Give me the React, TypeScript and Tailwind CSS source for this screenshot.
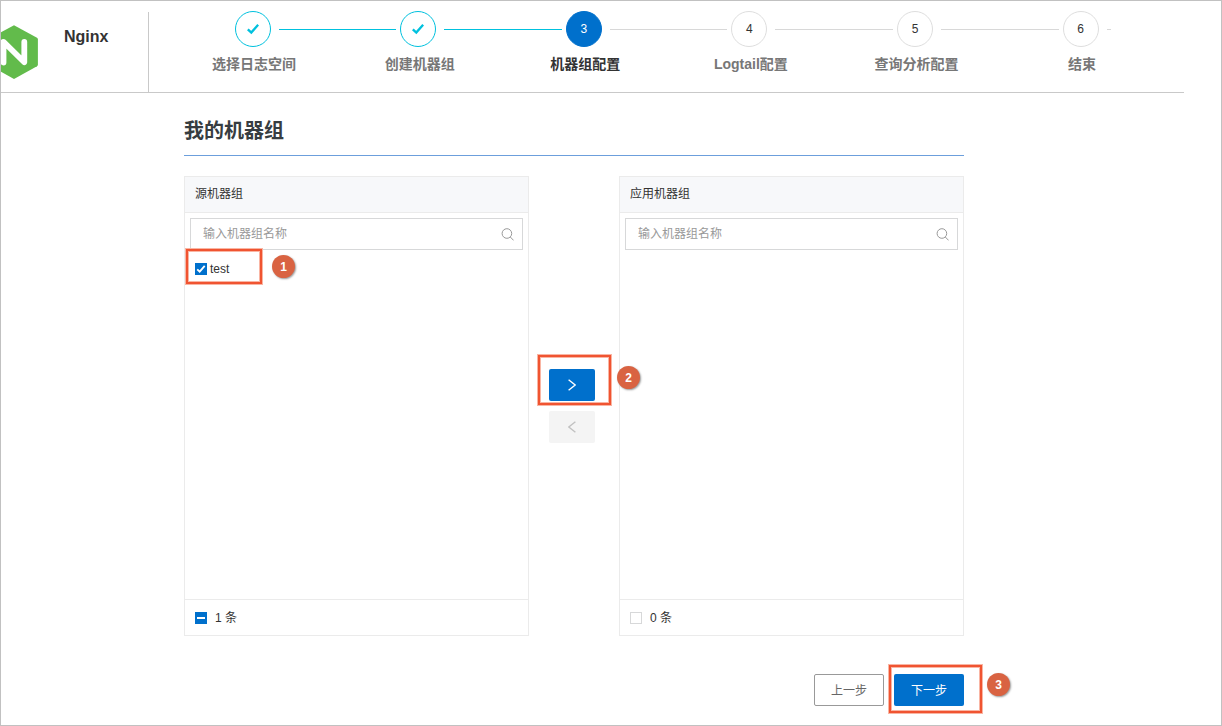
import clsx from "clsx";

type StepStatus = "done" | "active" | "pending";

type Step = {
  label: string;
  status: StepStatus;
};

const STEPS: Step[] = [
  { label: "选择日志空间", status: "done" },
  { label: "创建机器组", status: "done" },
  { label: "机器组配置", status: "active" },
  { label: "Logtail配置", status: "pending" },
  { label: "查询分析配置", status: "pending" },
  { label: "结束", status: "pending" },
];

function NginxLogo() {
  return (
    <svg className="mt-6 h-[54px] w-[38px] shrink-0" viewBox="1 25 38 54" aria-hidden="true">
      <path
        d="M14 25.2 37 37.8Q37.9 38.4 37.9 39.5V64.5Q37.9 65.6 37 66.2L14 78.9-9 66.2Q-9.9 65.6-9.9 64.5V39.5Q-9.9 38.4-9 37.8Z"
        fill="#62bb4b"
      />
      <path
        d="M3.5 62.5V41.8L24.3 62.2V42"
        fill="none"
        stroke="#fff"
        strokeWidth="5.8"
        strokeLinecap="round"
        strokeLinejoin="round"
      />
    </svg>
  );
}

function StepItem({ step, index, isLast }: { step: Step; index: number; isLast: boolean }) {
  return (
    <li className={clsx("shrink-0", isLast ? "w-12" : "w-[165.6px]")}>
      <div className="flex items-center">
        <span
          className={clsx(
            "flex size-9 shrink-0 items-center justify-center rounded-full border text-xs",
            step.status === "done" && "border-[#00c1de] text-[#00c1de]",
            step.status === "active" && "border-[#0070cc] bg-[#0070cc] text-white",
            step.status === "pending" && "border-[#dedede] text-[#333]",
          )}
        >
          {step.status === "done" ? (
            <svg className="size-3" viewBox="0 0 12 12" fill="none" aria-label="完成">
              <path d="M.8 6.3 4.3 9.6 11.2 1.7" stroke="currentColor" strokeWidth="2.4" />
            </svg>
          ) : (
            index + 1
          )}
        </span>
        <span
          className={clsx(
            "mt-px ml-2 h-px",
            isLast ? "w-1" : "mr-1 flex-1",
            step.status === "done" ? "bg-[#00c1de]" : "bg-[#d8d8d8]",
          )}
        />
      </div>
      <p
        className={clsx(
          "mt-[7px] -ml-10 w-[119px] text-center text-sm leading-5 font-bold whitespace-nowrap",
          step.status === "active" ? "text-[#333]" : "text-[#777]",
        )}
      >
        {step.label}
      </p>
    </li>
  );
}

function SearchBox() {
  return (
    <div className="m-[5px] flex h-8 items-center border border-[#d7d8d9] pr-2 pl-3">
      <input
        type="text"
        placeholder="输入机器组名称"
        className="min-w-0 flex-1 text-xs outline-none placeholder:text-[#999]"
      />
      <svg className="size-[13px] shrink-0" viewBox="0 0 13 13" fill="none" stroke="#999" aria-hidden="true">
        <circle cx="5.9" cy="5.5" r="4.8" />
        <path d="m9.3 9 3.3 3.4" />
      </svg>
    </div>
  );
}

function TransferPanel({
  title,
  count,
  items,
}: {
  title: string;
  count: number;
  items: string[];
}) {
  return (
    <section className="flex h-[460px] w-[345px] flex-col border border-[#ebebeb] text-xs text-[#333]">
      <h2 className="h-9 border-b border-[#ebebeb] bg-[#f7f8fa] px-2.5 leading-[35px]">{title}</h2>
      <SearchBox />
      <ul className="flex-1 px-2.5 pt-[3px]">
        {items.map((item) => (
          <li key={item} className="flex h-5 items-center gap-[3px]">
            <span className="mt-px flex size-3 items-center justify-center bg-[#0070cc]">
              <svg className="size-[10px]" viewBox="0 0 10 10" fill="none" aria-hidden="true">
                <path d="m1.2 5.3 2.5 2.4 5-5.8" stroke="#fff" strokeWidth="1.8" />
              </svg>
            </span>
            <span className="pt-px">{item}</span>
          </li>
        ))}
      </ul>
      <footer className="flex h-9 items-center border-t border-[#ebebeb] px-2.5">
        {count > 0 ? (
          <span className="mt-px flex size-3 items-center justify-center bg-[#0070cc]">
            <span className="h-0.5 w-2 bg-white" />
          </span>
        ) : (
          <span className="mt-px size-3 border border-[#d7d8d9]" />
        )}
        <span className="ml-2 pt-px">{count} 条</span>
      </footer>
    </section>
  );
}

// Numbered callout that sits on top of the page
function Callout({
  number,
  boxClass,
  badgeClass,
}: {
  number: number;
  boxClass: string;
  badgeClass: string;
}) {
  return (
    <>
      <span
        className={clsx(
          "pointer-events-none absolute border-2 border-[#f05431] shadow-[0_0_0_1px_#f9b5a3,inset_0_0_0_1px_#f9b5a3]",
          boxClass,
        )}
      />
      <span
        className={clsx(
          "pointer-events-none absolute flex size-[23px] items-center justify-center rounded-full bg-[#d96342] text-xs font-bold text-white shadow-[1px_1px_2px_#999]",
          badgeClass,
        )}
      >
        {number}
      </span>
    </>
  );
}

export default function App() {
  return (
    <div className="relative h-[726px] w-[1222px] overflow-hidden border border-[#c1c1c1] bg-white font-['Liberation_Sans','Noto_Sans_CJK_SC',sans-serif]">
      <header className="flex h-[92px] w-[1183px] border-b border-[#c9c9c9]">
        <div className="flex w-[147px] shrink-0">
          <NginxLogo />
          <h1 className="mt-6 ml-[25px] text-base font-bold text-[#333]">Nginx</h1>
        </div>
        <div className="mt-[11px] flex-1 border-l border-[#c9c9c9]">
          <ol className="-mt-px flex pl-[85.6px]">
            {STEPS.map((step, index) => (
              <StepItem
                key={step.label}
                step={step}
                index={index}
                isLast={index === STEPS.length - 1}
              />
            ))}
          </ol>
        </div>
      </header>

      <main className="ml-[183px] w-[780px]">
        <h2 className="h-[63px] border-b border-[#6c9fdc] pt-[23px] text-xl leading-[30px] font-bold text-[#373d41]">
          我的机器组
        </h2>

        <div className="mt-5 flex items-center">
          <TransferPanel title="源机器组" count={1} items={["test"]} />
          <div className="flex w-[90px] flex-col items-start gap-2.5 pl-5">
            <button
              type="button"
              aria-label="添加"
              className="flex h-8 w-[46px] items-center justify-center rounded-xs bg-[#0070cc] pb-px text-white"
            >
              <svg className="h-3 w-2" viewBox="0 0 8 12" fill="none" stroke="currentColor" strokeWidth="1.4">
                <path d="m.6.8 6.6 5.2-6.6 5.2" />
              </svg>
            </button>
            <button
              type="button"
              aria-label="移除"
              disabled
              className="flex h-8 w-[46px] items-center justify-center rounded-xs bg-[#f4f4f4] pb-px text-[#c1c1c1]"
            >
              <svg className="h-3 w-2" viewBox="0 0 8 12" fill="none" stroke="currentColor" strokeWidth="1.4">
                <path d="M7.4.8.8 6l6.6 5.2" />
              </svg>
            </button>
          </div>
          <TransferPanel title="应用机器组" count={0} items={[]} />
        </div>

        <div className="mt-[38px] flex justify-end gap-2.5 text-xs">
          <button type="button" className="h-8 w-[70px] rounded-xs border border-[#999] pt-0.5 text-[#666]">
            上一步
          </button>
          <button type="button" className="h-8 w-[70px] rounded-xs bg-[#0070cc] pt-0.5 text-white">
            下一步
          </button>
        </div>
      </main>

      <Callout
        number={1}
        boxClass="top-[248px] left-[185px] h-[35px] w-[76px]"
        badgeClass="top-[254px] left-[271px]"
      />
      <Callout
        number={2}
        boxClass="top-[354px] left-[537px] h-[50px] w-[73px]"
        badgeClass="top-[365px] left-[616px]"
      />
      <Callout
        number={3}
        boxClass="top-[664px] left-[888px] h-[48px] w-[93px]"
        badgeClass="top-[672px] left-[986px]"
      />
    </div>
  );
}
